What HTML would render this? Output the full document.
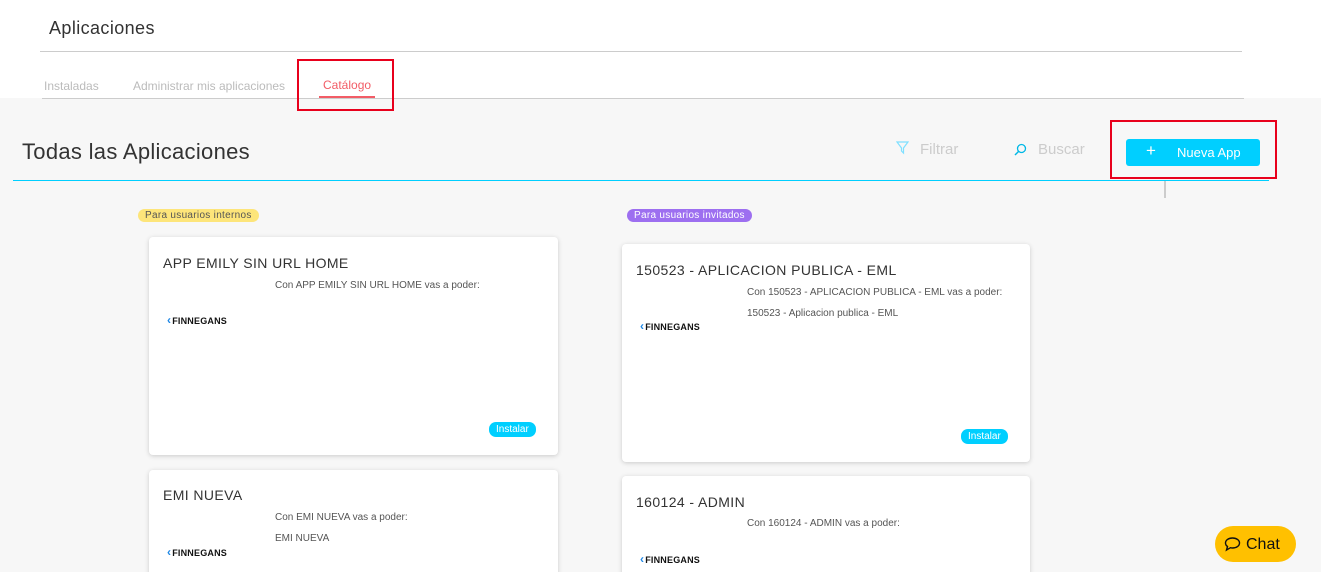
<!DOCTYPE html><html style="width:1321px;height:572px;overflow:hidden"><head><style>
*{margin:0;padding:0;box-sizing:border-box}
body{width:1321px;height:572px;overflow:hidden;background:#f7f7f7;font-family:"Liberation Sans",sans-serif;position:relative}
.a{position:absolute}
.card{position:absolute;background:#fff;border-radius:4px;box-shadow:0 1px 5px rgba(0,0,0,.18)}
.t{position:absolute;left:14px;font-size:14px;color:#333;letter-spacing:.4px}
.d{position:absolute;font-size:10px;color:#555}
.logo{position:absolute;left:18px;font-size:9px;font-weight:bold;color:#111;letter-spacing:.2px}
.logo b{color:#1e88e5;margin-right:1px;font-size:12px}
.btn{position:absolute;background:#00cfff;color:#fff;font-size:10px;border-radius:7px;padding:2px 7px}
</style></head><body>
<div class="a" style="left:0;top:0;width:1321px;height:98px;background:#fff"></div>
<div class="a" style="left:49px;top:18px;font-size:18px;color:#333;letter-spacing:.4px">Aplicaciones</div>
<div class="a" style="left:40px;top:51px;width:1202px;height:1px;background:#ccc"></div>
<div class="a" style="left:44px;top:79px;font-size:12px;color:#bbb">Instaladas</div>
<div class="a" style="left:133px;top:79px;font-size:12px;color:#bbb">Administrar mis aplicaciones</div>
<div class="a" style="left:323px;top:78px;font-size:12px;color:#f25c66">Catálogo</div>
<div class="a" style="left:319px;top:96px;width:56px;height:3px;background:#f25c66"></div>
<div class="a" style="left:42px;top:98px;width:1202px;height:1px;background:#ccc"></div>
<div class="a" style="left:297px;top:59px;width:97px;height:52px;border:2px solid #e8001c"></div>
<div class="a" style="left:22px;top:139px;font-size:22px;color:#333;letter-spacing:.3px">Todas las Aplicaciones</div>
<div class="a" style="left:13px;top:180px;width:1256px;height:1px;background:#00cfff"></div>
<svg class="a" style="left:896px;top:141px" width="13" height="14" viewBox="0 0 13 14"><path d="M1 1H12L7.5 7V12L5.5 10V7Z" fill="none" stroke="#7fe0ff" stroke-width="1.2"/></svg>
<div class="a" style="left:920px;top:141px;font-size:15px;color:#ccc">Filtrar</div>
<svg class="a" style="left:1014px;top:143px" width="13" height="13" viewBox="0 0 13 13"><circle cx="7.5" cy="5.5" r="4" fill="none" stroke="#00b8e6" stroke-width="1.3"/><path d="M4.5 8.5L1 12" stroke="#00b8e6" stroke-width="1.5"/></svg>
<div class="a" style="left:1038px;top:141px;font-size:15px;color:#ccc">Buscar</div>
<div class="a" style="left:1126px;top:139px;width:134px;height:27px;background:#00cfff;border-radius:3px;color:#fff;font-size:13px"><span class="a" style="left:20px;top:2px;font-size:17px">+</span><span class="a" style="left:51px;top:6px">Nueva App</span></div>
<div class="a" style="left:1110px;top:120px;width:167px;height:59px;border:2px solid #e8001c"></div>
<div class="a" style="left:1164px;top:181px;width:2px;height:17px;background:#ccc"></div>
<div class="a" style="left:138px;top:209px;background:#fde57a;color:#555;font-size:10px;border-radius:7px;padding:1px 7px;letter-spacing:.3px">Para usuarios internos</div>
<div class="a" style="left:627px;top:209px;background:#9d6ff0;color:#fff;font-size:10px;border-radius:7px;padding:1px 7px;letter-spacing:.3px">Para usuarios invitados</div>
<div class="card" style="left:149px;top:237px;width:409px;height:218px">
<div class="t" style="top:18px">APP EMILY SIN URL HOME</div>
<div class="d" style="left:126px;top:43px">Con APP EMILY SIN URL HOME vas a poder:</div>
<div class="logo" style="top:76px"><b>&lsaquo;</b>FINNEGANS</div>
<div class="btn" style="left:340px;top:185px">Instalar</div></div>
<div class="card" style="left:149px;top:470px;width:409px;height:120px">
<div class="t" style="top:17px">EMI NUEVA</div>
<div class="d" style="left:126px;top:42px">Con EMI NUEVA vas a poder:</div>
<div class="d" style="left:126px;top:63px">EMI NUEVA</div>
<div class="logo" style="top:75px"><b>&lsaquo;</b>FINNEGANS</div></div>
<div class="card" style="left:622px;top:244px;width:408px;height:218px">
<div class="t" style="top:18px">150523 - APLICACION PUBLICA - EML</div>
<div class="d" style="left:125px;top:43px">Con 150523 - APLICACION PUBLICA - EML vas a poder:</div>
<div class="d" style="left:125px;top:64px">150523 - Aplicacion publica - EML</div>
<div class="logo" style="top:75px"><b>&lsaquo;</b>FINNEGANS</div>
<div class="btn" style="left:339px;top:185px">Instalar</div></div>
<div class="card" style="left:622px;top:476px;width:408px;height:120px">
<div class="t" style="top:18px">160124 - ADMIN</div>
<div class="d" style="left:125px;top:42px">Con 160124 - ADMIN vas a poder:</div>
<div class="logo" style="top:76px"><b>&lsaquo;</b>FINNEGANS</div></div>
<div class="a" style="left:1215px;top:526px;width:81px;height:36px;background:#ffc000;border-radius:18px;font-size:16px;color:#111">
<svg class="a" style="left:9px;top:11px" width="17" height="15" viewBox="0 0 17 15"><path d="M8.5 1C4.5 1 1.5 3.2 1.5 6C1.5 7.5 2.3 8.7 3.5 9.5L2.5 13L6.5 10.7C7.2 10.9 7.8 11 8.5 11C12.5 11 15.5 8.8 15.5 6C15.5 3.2 12.5 1 8.5 1Z" fill="none" stroke="#111" stroke-width="1.4"/></svg>
<span class="a" style="left:31px;top:10px">Chat</span></div>
</body></html>
